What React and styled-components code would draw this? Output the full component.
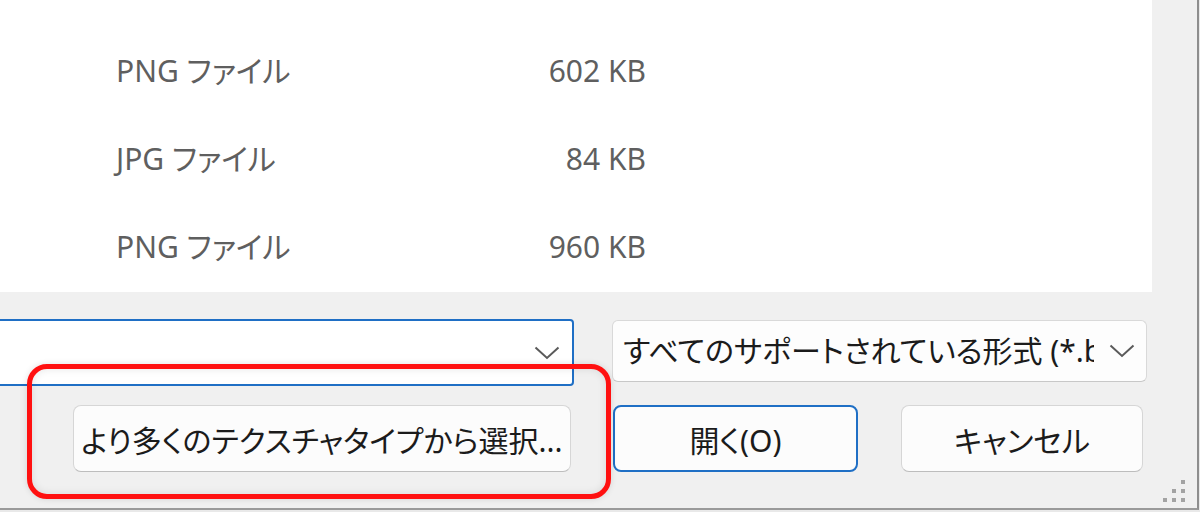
import React from 'react'
import styled, { createGlobalStyle } from 'styled-components'

const Global = createGlobalStyle`
  html, body {
    margin: 0;
    padding: 0;
    background: #e9e9e9;
  }
  body {
    width: 1200px;
    height: 512px;
    overflow: hidden;
    font-family: "Noto Sans", "Noto Sans CJK JP", sans-serif;
  }
`

const Frame = styled.div`
  position: relative;
  width: 1197px;
  height: 508px;
  background: #f0f0f0;
  border-right: 2px solid #8e8e8e;
  border-bottom: 2px solid #9a9a9a;
  display: flex;
  flex-direction: column;
  overflow: hidden;
`

const FileList = styled.div`
  width: 1152px;
  height: 292px;
  background: #ffffff;
  box-sizing: border-box;
  padding: 54px 0 0 116px;
`

const Row = styled.div`
  display: grid;
  grid-template-columns: 270px 260px;
  height: 88px;
  align-items: start;
`

const Cell = styled.span`
  font-size: 30px;
  color: #5f5f5f;
  white-space: nowrap;
  text-align: ${p => (p.right ? 'right' : 'left')};
  font-feature-settings: "palt";
  line-height: 34px;
`

const Fields = styled.div`
  display: flex;
  align-items: flex-start;
  margin-top: 27px;
  height: 86px;
`

const NameInput = styled.div`
  width: 584px;
  height: 67px;
  margin-left: -10px;
  box-sizing: border-box;
  background: #ffffff;
  border: 2px solid #1f6fc5;
  border-radius: 4px;
  display: flex;
  align-items: center;
  justify-content: flex-end;
  padding-right: 12px;
`

const Select = styled.div`
  width: 535px;
  height: 62px;
  margin-left: 38px;
  margin-top: 1px;
  box-sizing: border-box;
  background: #fdfdfd;
  border: 1px solid #d9d9d9;
  border-bottom-color: #c8c8c8;
  border-radius: 6px;
  display: flex;
  align-items: center;
  padding: 0 11px 0 10px;
`

const SelectText = styled.span`
  width: 471px;
  overflow: hidden;
  white-space: nowrap;
  font-size: 30px;
  color: #1b1b1b;
  font-feature-settings: "palt";
  line-height: 40px;
`

const Chevron = styled.svg`
  width: 26px;
  height: 14px;
  margin-left: auto;
  flex: none;
`

const Buttons = styled.div`
  display: flex;
  align-items: center;
  height: 67px;
  padding-left: 73px;
`

const Button = styled.div`
  width: ${p => p.w}px;
  height: 67px;
  margin-right: ${p => p.gap || 0}px;
  box-sizing: border-box;
  background: #fcfcfc;
  border: ${p => (p.primary ? '2px solid #1f6fc5' : '1px solid #d6d6d6')};
  border-bottom-color: ${p => (p.primary ? '#1f6fc5' : '#bdbdbd')};
  border-radius: 8px;
  display: flex;
  align-items: center;
  justify-content: center;
  font-size: 30px;
  color: #1b1b1b;
  font-feature-settings: "palt";
  white-space: nowrap;
`

const Highlight = styled.div`
  position: absolute;
  left: 27px;
  top: 364px;
  width: 584px;
  height: 135px;
  box-sizing: border-box;
  border: 5px solid #ff1010;
  border-radius: 20px;
  box-shadow: 0 0 6px rgba(0, 0, 0, 0.12), inset 0 0 8px rgba(0, 0, 0, 0.1);
  pointer-events: none;
`

const Grip = styled.svg`
  position: absolute;
  right: 12px;
  bottom: 6px;
  width: 22px;
  height: 22px;
`

const ChevronIcon = () => (
  <Chevron viewBox="0 0 26 14">
    <path d="M1.5 1.5 L13 12 L24.5 1.5" fill="none" stroke="#5a5a5a" strokeWidth="2" />
  </Chevron>
)

const files = [
  { type: 'PNG ファイル', size: '602 KB' },
  { type: 'JPG ファイル', size: '84 KB' },
  { type: 'PNG ファイル', size: '960 KB' },
]

export default function App() {
  return (
    <>
      <Global />
      <Frame>
        <FileList>
          {files.map((f, i) => (
            <Row key={i}>
              <Cell>{f.type}</Cell>
              <Cell right>{f.size}</Cell>
            </Row>
          ))}
        </FileList>

        <Fields>
          <NameInput>
            <ChevronIcon />
          </NameInput>
          <Select>
            <SelectText>すべてのサポートされている形式 (*.bmp;*.png;*.jpg)</SelectText>
            <ChevronIcon />
          </Select>
        </Fields>

        <Buttons>
          <Button w={498} gap={42}>より多くのテクスチャタイプから選択...</Button>
          <Button w={245} gap={43} primary>開く(O)</Button>
          <Button w={242}>キャンセル</Button>
        </Buttons>

        <Highlight />
        <Grip viewBox="0 0 22 22">
          <rect x="18" y="0" width="4" height="4" fill="#a3a3a3" />
          <rect x="9" y="9" width="4" height="4" fill="#a3a3a3" />
          <rect x="18" y="9" width="4" height="4" fill="#a3a3a3" />
          <rect x="0" y="18" width="4" height="4" fill="#a3a3a3" />
          <rect x="9" y="18" width="4" height="4" fill="#a3a3a3" />
          <rect x="18" y="18" width="4" height="4" fill="#a3a3a3" />
        </Grip>
      </Frame>
    </>
  )
}
